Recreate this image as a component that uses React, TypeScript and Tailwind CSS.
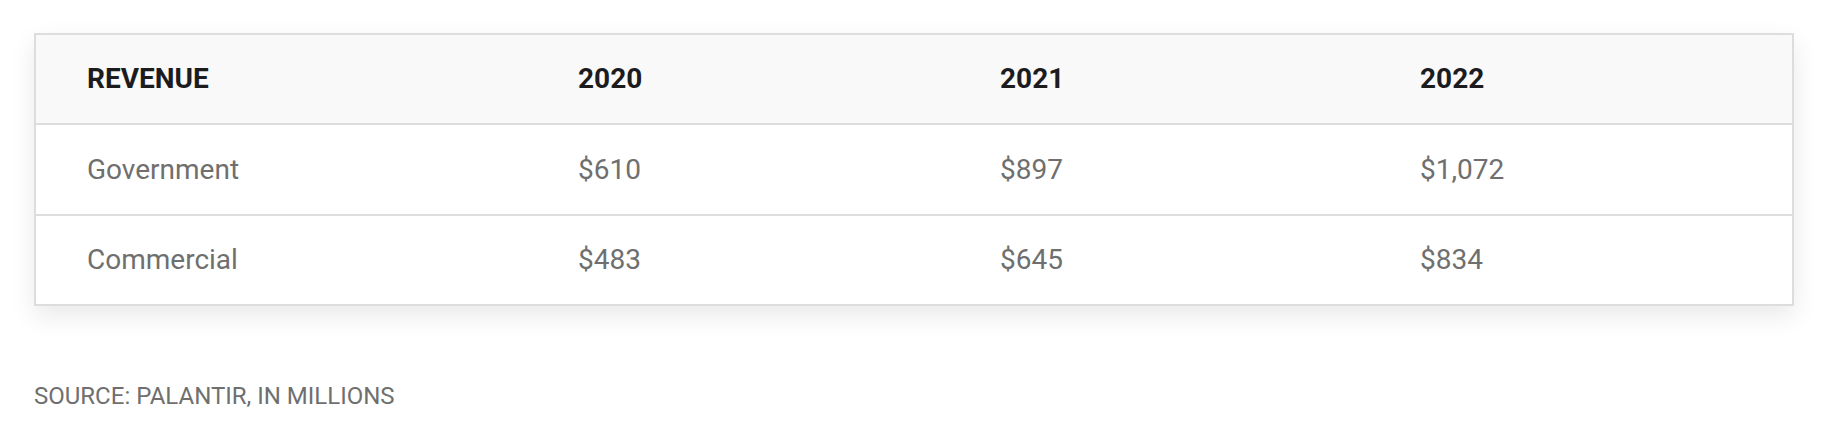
const ROWS = [
  { label: "Government", values: ["$610", "$897", "$1,072"], h: "h-[91px]" },
  { label: "Commercial", values: ["$483", "$645", "$834"], h: "h-[88px]" },
];

const YEARS = ["2020", "2021", "2022"];

export default function App() {
  return (
    <div
      className="min-h-[444px] bg-white pl-[34px] pr-[30px] pt-[33px]"
      style={{ fontFamily: "Roboto, 'Liberation Sans', sans-serif" }}
    >
      {/* Revenue table */}
      <div className="border-2 border-[#dddddd] text-[28px] shadow-[0_10px_24px_rgba(0,0,0,0.09)]">
        <div className="grid h-[90px] grid-cols-[542px_422px_420px_1fr] items-center border-b-2 border-[#dddddd] bg-[#f9f9f9] font-bold text-[#1c1c1e]">
          <span className="pl-[51px]">REVENUE</span>
          {YEARS.map((year) => (
            <span key={year}>{year}</span>
          ))}
        </div>
        {ROWS.map((row, i) => (
          <div
            key={row.label}
            className={`grid ${row.h} grid-cols-[542px_422px_420px_1fr] items-center text-[#6f6f6f] ${
              i < ROWS.length - 1 ? "border-b-2 border-[#dddddd]" : ""
            }`}
          >
            <span className="pl-[51px]">{row.label}</span>
            {row.values.map((v) => (
              <span key={v}>{v}</span>
            ))}
          </div>
        ))}
      </div>

      <p className="mt-[72px] text-[24px] leading-[36px] text-[#6f6f6f]">SOURCE: PALANTIR, IN MILLIONS</p>
    </div>
  );
}
